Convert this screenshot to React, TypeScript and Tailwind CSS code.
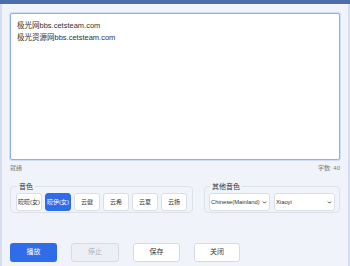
import { ChevronDown } from "lucide-react";

const voices = ["晓晓(女)", "晓伊(女)", "云健", "云希", "云夏", "云扬"];

function Select({ value, width }: { value: string; width: string }) {
  return (
    <div
      className={`flex h-[18px] ${width} items-center justify-between overflow-hidden rounded-[3px] border border-[#d9dee7] bg-white pl-[1px] pr-[2px] text-[5.8px] text-[#333]`}
    >
      <span className="whitespace-nowrap">{value}</span>
      <ChevronDown className="h-[5px] w-[5px] shrink-0 text-[#222]" strokeWidth={4} />
    </div>
  );
}

export default function App() {
  return (
    <div
      className="flex h-[266px] w-[350px] flex-col border-x-2 border-[#d5def0] bg-[#f0f3f9] text-[#333]"
      style={{ fontFamily: '"Liberation Sans", "Noto Sans CJK SC", sans-serif' }}
    >
      <div className="-mx-[2px] h-[4px] shrink-0 bg-[#4d6ea8]" />

      <div className="flex flex-1 flex-col px-2 pb-[4px]">
        <textarea
          readOnly
          className="mt-[9px] h-[147px] w-full resize-none rounded-[2px] border border-[#8fb0ee] bg-white px-[6px] pt-[6px] text-[7.5px] leading-[12px] text-[#333] shadow-[0_0_0_1px_#cfddf8] outline-none"
          defaultValue={"极光网bbs.cetsteam.com\n极光资源网bbs.cetsteam.com"}
        />

        <div className="mt-[3px] flex h-[10px] items-center justify-between text-[6px] text-[#777]">
          <span>就绪</span>
          <span>字数: 40</span>
        </div>

        <div className="mt-[9px] flex gap-[11px]">
          <fieldset className="w-[183px] rounded-[4px] border border-[#dde2ea] px-[5px] pb-[1px]">
            <legend className="ml-[1px] px-[2px] text-[7px] leading-[9px] text-[#333]">音色</legend>
            <div className="mt-[2px] flex justify-between">
              {voices.map((v, i) => (
                <button
                  key={v}
                  className={
                    i === 1
                      ? "h-[18px] w-[26px] rounded-[3px] border border-[#2f6de8] bg-[#2f6de8] text-[6px] text-white"
                      : "h-[18px] w-[26px] rounded-[3px] border border-[#d9dee7] bg-white text-[6px] text-[#333]"
                  }
                >
                  {v}
                </button>
              ))}
            </div>
          </fieldset>

          <fieldset className="w-[136px] rounded-[4px] border border-[#dde2ea] px-[4px] pb-[1px]">
            <legend className="ml-[1px] px-[2px] text-[7px] leading-[9px] text-[#333]">其他音色</legend>
            <div className="mt-[2px] flex justify-between">
              <Select value="Chinese(Mainland)" width="w-[61px]" />
              <Select value="Xiaoyi" width="w-[61px]" />
            </div>
          </fieldset>
        </div>

        <div className="mt-auto flex gap-[14px]">
          <button className="h-[19px] w-[47px] rounded-[3px] bg-[#2f6de8] text-[7px] text-white">播放</button>
          <button className="h-[19px] w-[48px] rounded-[3px] border border-[#d6dbe3] bg-[#eceff4] text-[7px] text-[#a9afb8]">
            停止
          </button>
          <button className="h-[19px] w-[47px] rounded-[3px] border border-[#d6dbe3] bg-white text-[7px] text-[#333]">保存</button>
          <button className="h-[19px] w-[46px] rounded-[3px] border border-[#d6dbe3] bg-white text-[7px] text-[#333]">关闭</button>
        </div>
      </div>
    </div>
  );
}
